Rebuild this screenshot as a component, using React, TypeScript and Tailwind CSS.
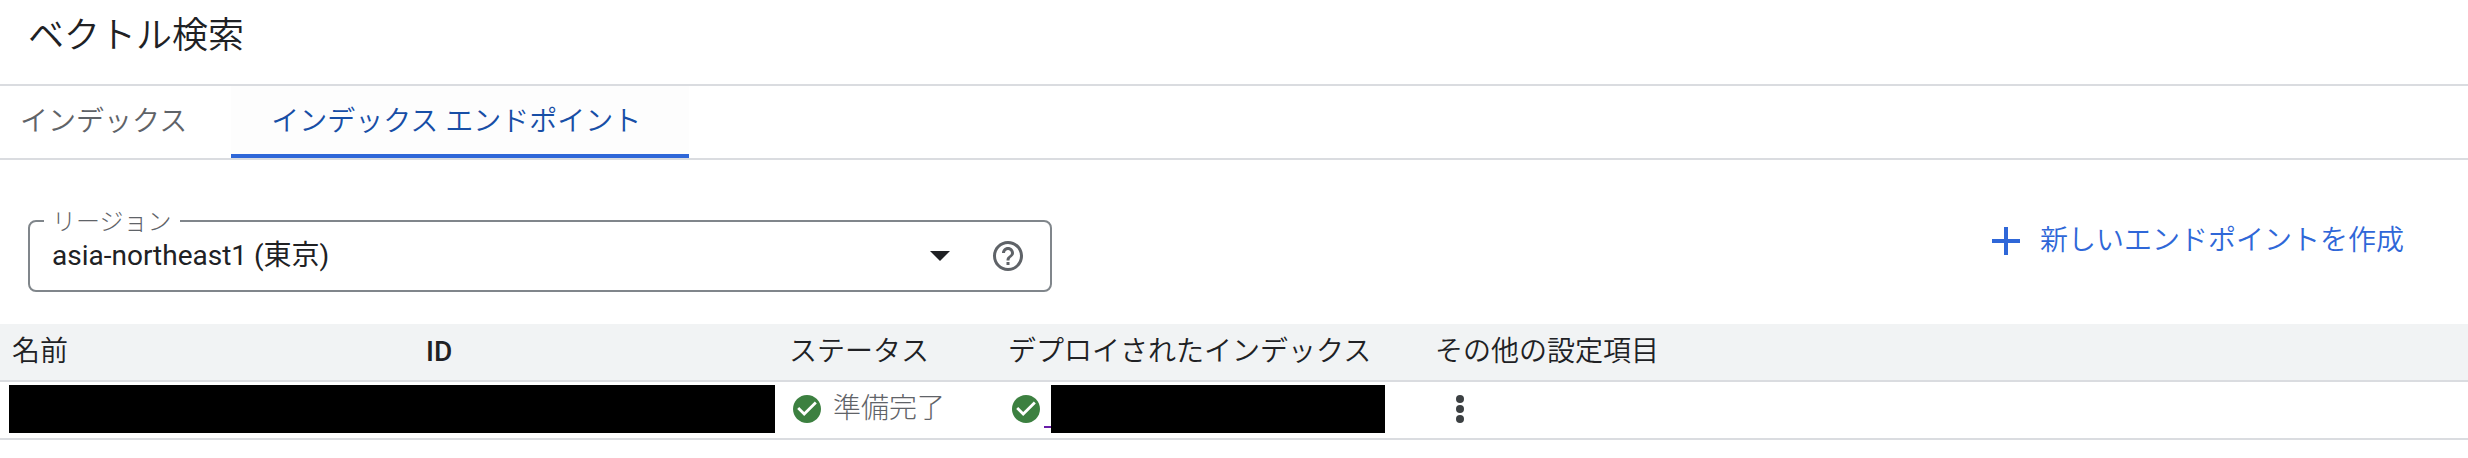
import { useState } from "react";

const TABS = [
  { id: "indexes", label: "インデックス" },
  { id: "endpoints", label: "インデックス エンドポイント" },
];

function CheckCircle({ label }: { label?: string }) {
  return (
    <svg className="size-7 shrink-0" viewBox="2 2 20 20" role="img" aria-label={label}>
      <path
        fill="#3c8040"
        d="M12 2C6.48 2 2 6.48 2 12s4.48 10 10 10 10-4.48 10-10S17.52 2 12 2z"
      />
      <path fill="#fff" d="M10 17l-5-5 1.41-1.41L10 14.17l7.59-7.59L19 8l-9 9z" />
    </svg>
  );
}

function RegionSelect() {
  const [region, setRegion] = useState("asia-northeast1");

  return (
    <fieldset className="w-[1024px] min-w-0 rounded-lg border-2 border-[#80868b] px-[14px] pb-3">
      <legend className="px-2 pt-[2px] text-2xl leading-6 font-light text-[#5f6368]">
        <label htmlFor="region">リージョン</label>
      </legend>
      <div className="flex items-center pr-[10px]">
        <div className="relative flex-1">
          <select
            id="region"
            value={region}
            onChange={(e) => setRegion(e.target.value)}
            className="block h-11 w-full appearance-none bg-transparent px-2 text-[28px] leading-[44px] outline-none"
          >
            <option value="asia-northeast1">asia-northeast1 (東京)</option>
            <option value="asia-northeast2">asia-northeast2 (大阪)</option>
          </select>
          <svg
            className="pointer-events-none absolute top-[17px] right-10 h-[10px] w-5"
            viewBox="0 0 20 10"
          >
            <path fill="#202124" d="M0 0h20L10 10z" />
          </svg>
        </div>
        <button type="button" aria-label="ヘルプ" className="text-[#5f6368]">
          <svg className="size-9" viewBox="0 0 24 24" fill="currentColor">
            <path d="M11 18h2v-2h-2v2zm1-16C6.48 2 2 6.48 2 12s4.48 10 10 10 10-4.48 10-10S17.52 2 12 2zm0 18c-4.41 0-8-3.59-8-8s3.59-8 8-8 8 3.59 8 8-3.59 8-8 8zm0-14c-2.21 0-4 1.79-4 4h2c0-1.1.9-2 2-2s2 .9 2 2c0 2-3 1.75-3 5h2c0-2.25 3-2.5 3-5 0-2.21-1.79-4-4-4z" />
          </svg>
        </button>
      </div>
    </fieldset>
  );
}

export default function App() {
  const [activeTab, setActiveTab] = useState("endpoints");

  return (
    <main className="min-h-screen bg-white font-[Roboto,'Noto_Sans_CJK_JP',sans-serif] text-[#202124]">
      <header className="border-b-2 border-[#dadce0] px-7 pt-[10px] pb-[22px]">
        <h1 className="text-4xl leading-[52px] font-[350]">ベクトル検索</h1>
      </header>

      <nav role="tablist" className="flex h-[74px] border-b-2 border-[#dadce0]">
        {TABS.map((tab) => (
          <button
            key={tab.id}
            type="button"
            role="tab"
            aria-selected={tab.id === activeTab}
            onClick={() => setActiveTab(tab.id)}
            className={`border-b-4 pt-1 pr-11 pl-10 text-[28px] font-[350] first:pl-5 last:pr-12 ${
              tab.id === activeTab
                ? "border-[#2f67d8] bg-[#fdfdfd] text-[#174ea6]"
                : "border-transparent text-[#5f6368]"
            }`}
          >
            {tab.label}
          </button>
        ))}
      </nav>

      <div className="flex items-start justify-between pt-12 pr-16 pb-8 pl-7">
        <RegionSelect />
        <button
          type="button"
          className="flex h-[66px] shrink-0 items-center gap-5 text-[28px] font-[350] text-[#2f67d8]"
        >
          <svg className="size-7" viewBox="0 0 14 14" fill="currentColor">
            <path d="M14 8H8v6H6V8H0V6h6V0h2v6h6z" />
          </svg>
          新しいエンドポイントを作成
        </button>
      </div>

      <table className="w-full table-fixed border-separate border-spacing-0 text-left text-[28px]">
        <colgroup>
          <col className="w-[414px]" />
          <col className="w-[363px]" />
          <col className="w-[219px]" />
          <col className="w-[427px]" />
          <col />
        </colgroup>
        <thead>
          <tr className="h-[58px] bg-[#f1f3f4] *:border-b-2 *:border-[#dadce0] *:pl-3">
            <th className="font-[350]">名前</th>
            <th className="font-medium">ID</th>
            <th className="font-[350]">ステータス</th>
            <th className="font-[350]">デプロイされたインデックス</th>
            <th className="font-[350]">その他の設定項目</th>
          </tr>
        </thead>
        <tbody>
          <tr className="h-[58px] *:border-b-2 *:border-[#dadce0] *:pb-[2px]">
            <td colSpan={2} className="pr-[2px] pl-[9px]">
              <div className="h-12 bg-black" />
            </td>
            <td className="pl-4">
              <div className="flex items-center gap-3 leading-10 font-light text-[#5f6368]">
                <CheckCircle />
                準備完了
              </div>
            </td>
            <td className="pr-[38px] pl-4">
              <div className="flex items-center">
                <CheckCircle label="準備完了" />
                <a href="#" aria-label="インデックス" className="ml-1 flex flex-1 items-end">
                  <span className="mb-[5px] h-[2px] w-[7px] bg-[#681da8]" />
                  <span className="h-12 flex-1 bg-black" />
                </a>
              </div>
            </td>
            <td className="pl-[33px]">
              <button type="button" aria-label="その他" className="flex text-[#3c4043]">
                <svg className="h-7 w-2" viewBox="0 0 8 28" fill="currentColor">
                  <circle cx="4" cy="4" r="4" />
                  <circle cx="4" cy="14" r="4" />
                  <circle cx="4" cy="24" r="4" />
                </svg>
              </button>
            </td>
          </tr>
        </tbody>
      </table>
    </main>
  );
}
